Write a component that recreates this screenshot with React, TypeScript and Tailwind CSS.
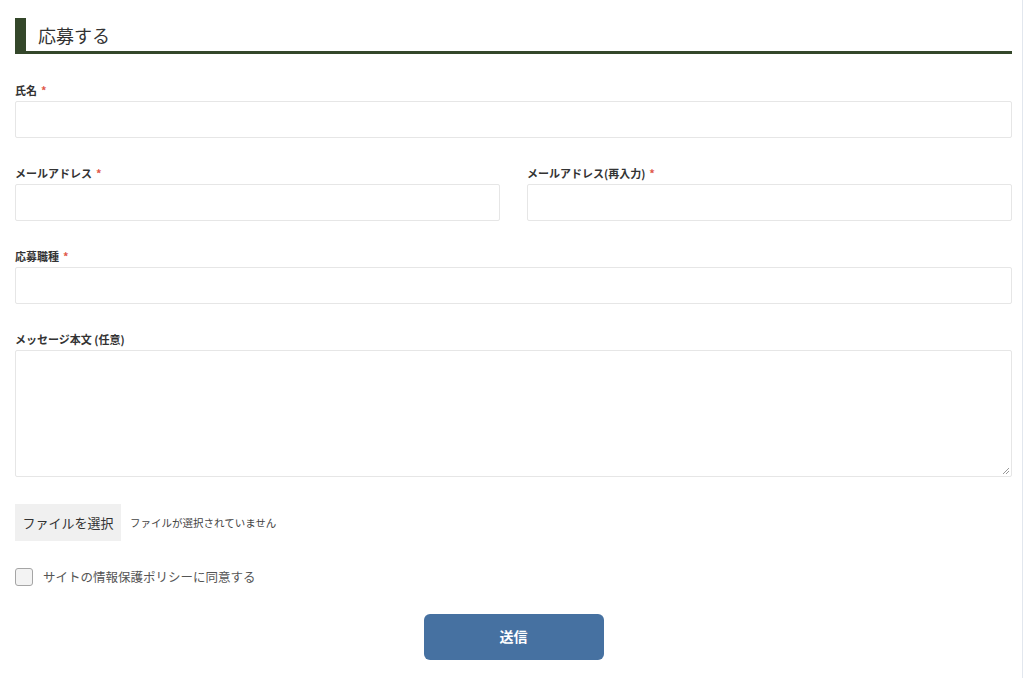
const font = { fontFamily: '"Noto Sans CJK JP", "Noto Sans", sans-serif' };

const Label = ({ text, required }: { text: string; required?: boolean }) => (
  <div className="h-[16px] flex items-center text-[11px] font-bold text-[#333] leading-none">
    <span>{text}</span>
    {required && <span className="ml-[4px] text-[#e0584a]">*</span>}
  </div>
);

const Input = () => (
  <div className="h-[37px] mt-[3px] border border-[#e6e6e6] rounded-[2px] bg-white" />
);

const App = () => {
  return (
    <div className="w-[1023px] h-[678px] bg-white border-r border-[#e2e7ee]" style={font}>
      <div className="pl-[15px] pr-[10px] pt-[18px]">
        {/* heading */}
        <div className="flex items-stretch h-[36px] border-b-[3px] border-[#34472a]">
          <div className="w-[11px] bg-[#34472a]" />
          <div className="pl-[12px] flex items-center text-[18px] text-[#333] leading-none">応募する</div>
        </div>

        <div className="mt-[28px]">
          <Label text="氏名" required />
          <Input />
        </div>

        <div className="mt-[27px] grid grid-cols-2 gap-x-[27px]">
          <div>
            <Label text="メールアドレス" required />
            <Input />
          </div>
          <div>
            <Label text="メールアドレス(再入力)" required />
            <Input />
          </div>
        </div>

        <div className="mt-[27px]">
          <Label text="応募職種" required />
          <Input />
        </div>

        <div className="mt-[27px]">
          <Label text="メッセージ本文 (任意)" />
          <div className="relative h-[127px] mt-[3px] border border-[#e6e6e6] rounded-[2px] bg-white">
            <svg className="absolute right-[1px] bottom-[1px]" width="8" height="8" viewBox="0 0 8 8">
              <path d="M7 1 L1 7 M7 4 L4 7" stroke="#999" strokeWidth="1" />
            </svg>
          </div>
        </div>

        <div className="mt-[27px] flex items-center">
          <div className="w-[106px] h-[37px] bg-[#f0f0f0] flex items-center justify-center text-[13px] text-[#333]">ファイルを選択</div>
          <span className="ml-[9px] text-[10.5px] text-[#444]">ファイルが選択されていません</span>
        </div>

        <div className="mt-[27px] flex items-center">
          <div className="w-[18px] h-[18px] border border-[#a5a5a5] rounded-[3px] bg-[#f3f3f3]" />
          <span className="ml-[10px] text-[12.5px] text-[#555]">サイトの情報保護ポリシーに同意する</span>
        </div>

        <div className="mt-[27px] flex justify-center">
          <div className="w-[180px] h-[46px] rounded-[6px] bg-[#4671a1] flex items-center justify-center text-white text-[14px] font-bold">送信</div>
        </div>
      </div>
    </div>
  );
};

export default App;
